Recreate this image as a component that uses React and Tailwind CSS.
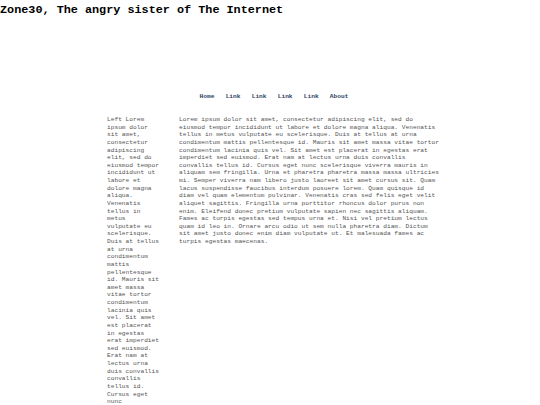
export default function App() {
  const left =
    "Left Lorem ipsum dolor sit amet, consectetur adipiscing elit, sed do eiusmod tempor incididunt ut labore et dolore magna aliqua. Venenatis tellus in metus vulputate eu scelerisque. Duis at tellus at urna condimentum mattis pellentesque id. Mauris sit amet massa vitae tortor condimentum lacinia quis vel. Sit amet est placerat in egestas erat imperdiet sed euismod. Erat nam at lectus urna duis convallis convallis tellus id. Cursus eget nunc scelerisque viverra mauris in aliquam sem fringilla.";
  const main =
    "Lorem ipsum dolor sit amet, consectetur adipiscing elit, sed do eiusmod tempor incididunt ut labore et dolore magna aliqua. Venenatis tellus in metus vulputate eu scelerisque. Duis at tellus at urna condimentum mattis pellentesque id. Mauris sit amet massa vitae tortor condimentum lacinia quis vel. Sit amet est placerat in egestas erat imperdiet sed euismod. Erat nam at lectus urna duis convallis convallis tellus id. Cursus eget nunc scelerisque viverra mauris in aliquam sem fringilla. Urna et pharetra pharetra massa massa ultricies mi. Semper viverra nam libero justo laoreet sit amet cursus sit. Quam lacus suspendisse faucibus interdum posuere lorem. Quam quisque id diam vel quam elementum pulvinar. Venenatis cras sed felis eget velit aliquet sagittis. Fringilla urna porttitor rhoncus dolor purus non enim. Eleifend donec pretium vulputate sapien nec sagittis aliquam. Fames ac turpis egestas sed tempus urna et. Nisi vel pretium lectus quam id leo in. Ornare arcu odio ut sem nulla pharetra diam. Dictum sit amet justo donec enim diam vulputate ut. Et malesuada fames ac turpis egestas maecenas.";
  const links = ["Home", "Link", "Link", "Link", "Link", "About"];
  return (
    <div
      className="w-[540px] h-[405px] overflow-hidden bg-white"
      style={{ fontFamily: '"Liberation Mono", "Courier New", monospace' }}
    >
      <h1 className="pt-[4px] text-[11.8px] leading-[13px] font-bold text-black">
        Zone30, The angry sister of The Internet
      </h1>
      <div className="ml-[107px] w-[334px]">
        <nav className="mt-[76px] flex justify-center gap-[11.2px] text-[6.2px] leading-[8px] font-bold text-[#2f4466]">
          {links.map((l, i) => (
            <a key={i} className="cursor-pointer">{l}</a>
          ))}
        </nav>
        <div className="mt-[15px] flex gap-[18px] text-[6.2px] leading-[7.62px] text-[#555]">
          <p className="w-[54px] shrink-0">{left}</p>
          <p className="w-[262px] shrink-0">{main}</p>
        </div>
      </div>
    </div>
  );
}
